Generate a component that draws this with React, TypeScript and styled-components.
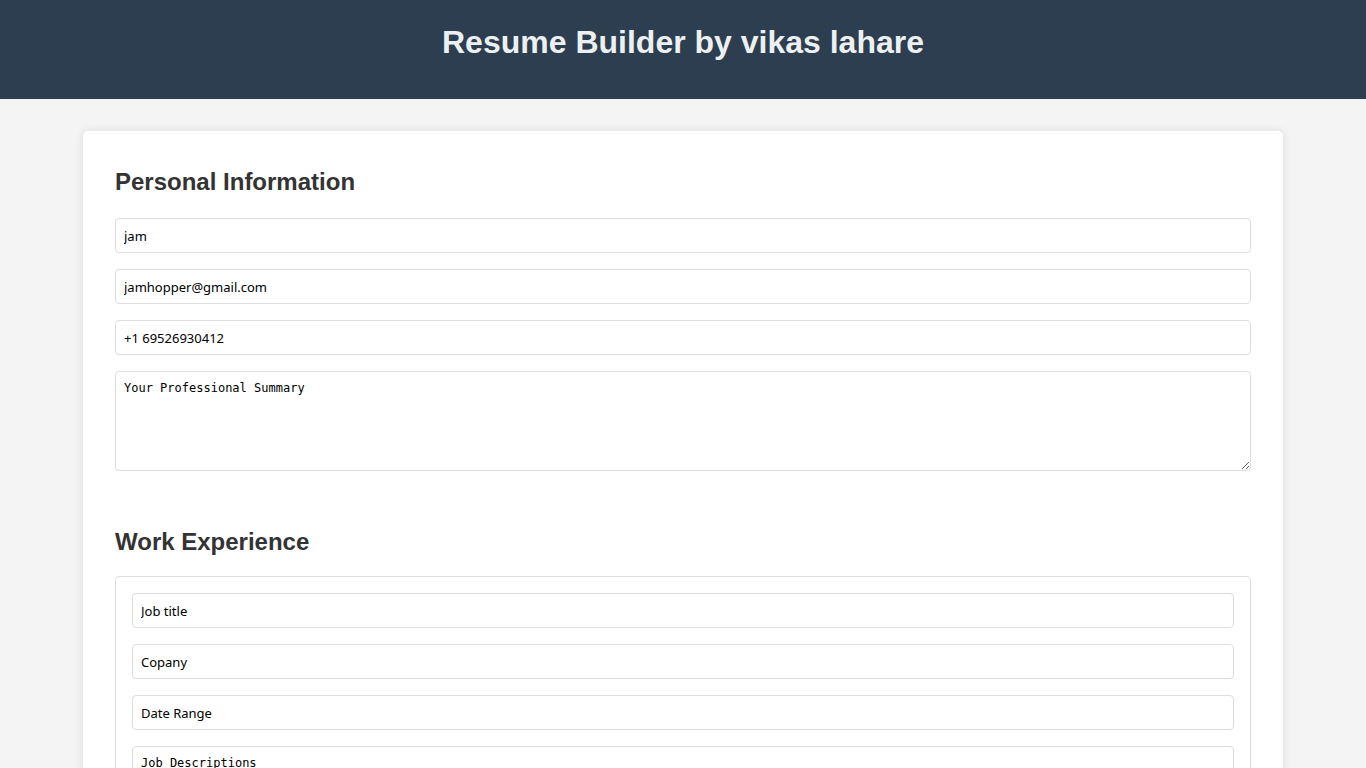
import React from "react";
import styled, { createGlobalStyle } from "styled-components";

const GlobalStyle = createGlobalStyle`
  html, body {
    margin: 0;
    padding: 0;
    background: #f4f4f4;
    font-family: "Liberation Sans", Arial, sans-serif;
    color: #333;
  }
  * { box-sizing: border-box; }
`;

const Header = styled.header`
  background: #2c3e50;
  height: 99px;
  padding-top: 24px;
`;

const Title = styled.h1`
  margin: 0;
  text-align: center;
  font-family: "Liberation Sans", Arial, sans-serif;
  font-size: 32px;
  line-height: 37px;
  font-weight: 700;
  color: #ecf0f1;
`;

const Card = styled.main`
  max-width: 1200px;
  margin: 32px auto;
  background: #fff;
  border-radius: 5px;
  box-shadow: 0 0 10px rgba(0, 0, 0, 0.1);
  padding: 37px 32px 32px;
`;

const Section = styled.section`
  & + & {
    margin-top: 57px;
  }
`;

const Heading = styled.h2<{ $gap: number }>`
  margin: 0 0 ${(p) => p.$gap}px;
  font-family: "Liberation Sans", Arial, sans-serif;
  font-size: 24px;
  line-height: 28px;
  font-weight: 700;
  color: #333;
`;

const Fields = styled.div`
  display: flex;
  flex-direction: column;
  gap: 16px;
`;

const Input = styled.input`
  width: 100%;
  height: 35px;
  padding: 0 8px;
  border: 1px solid #ddd;
  border-radius: 4px;
  font-family: "Noto Sans", "Open Sans", sans-serif;
  font-size: 13px;
  color: #000;
  background: #fff;
  outline: none;
`;

const TextArea = styled.textarea`
  width: 100%;
  height: 100px;
  padding: 9px 8px 8px;
  border: 1px solid #ddd;
  border-radius: 4px;
  font-family: "DejaVu Sans Mono", monospace;
  font-size: 12px;
  line-height: 15px;
  color: #000;
  background: #fff;
  resize: vertical;
  outline: none;
  display: block;
`;

const EntryBox = styled.div`
  border: 1px solid #ddd;
  border-radius: 4px;
  padding: 16px;
`;

export default function App() {
  return (
    <>
      <GlobalStyle />
      <Header>
        <Title>Resume Builder by vikas lahare</Title>
      </Header>
      <Card>
        <Section>
          <Heading $gap={22}>Personal Information</Heading>
          <Fields>
            <Input defaultValue="jam" />
            <Input defaultValue="jamhopper@gmail.com" />
            <Input defaultValue="+1 69526930412" />
            <TextArea defaultValue="Your Professional Summary" />
          </Fields>
        </Section>
        <Section>
          <Heading $gap={20}>Work Experience</Heading>
          <EntryBox>
            <Fields>
              <Input defaultValue="Job title" />
              <Input defaultValue="Copany" />
              <Input defaultValue="Date Range" />
              <TextArea defaultValue="Job Descriptions" />
            </Fields>
          </EntryBox>
        </Section>
      </Card>
    </>
  );
}
